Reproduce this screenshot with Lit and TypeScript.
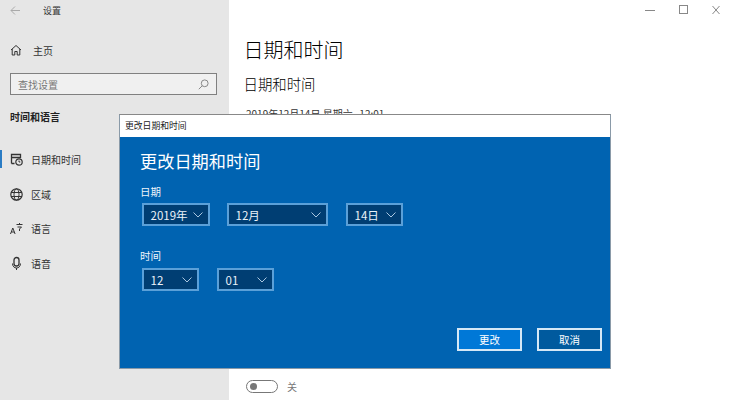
import { LitElement, html, css, svg } from "lit";
import { customElement } from "lit/decorators.js";

const chevron = html`<svg class="chev" width="10" height="6" viewBox="0 0 10 6"><path d="M.5.5L5 5 9.500.5" fill="none" stroke="#a9c6e0" stroke-width="1"/></svg>`;

const icons: Record<string, unknown> = {
  clock: svg`<path d="M2.500 11.500V2.500h9v3.500M2.500 5.500h9M2.500 11.500h3" fill="none" stroke="#333" stroke-width="1.3"/><circle cx="10" cy="10" r="3.200" fill="none" stroke="#333" stroke-width="1.2"/><path d="M10 8.500V10h1.300" fill="none" stroke="#333"/>`,
  globe: svg`<circle cx="7.500" cy="7.500" r="5.700" fill="none" stroke="#333" stroke-width="1.2"/><ellipse cx="7.500" cy="7.500" rx="2.500" ry="5.700" fill="none" stroke="#333"/><path d="M2 5.500h11M2 9.500h11" stroke="#333"/>`,
  lang: svg`<path d="M1.500 13l2.300-6 2.300 6M2.400 11h2.800" fill="none" stroke="#333" stroke-width="1"/><path d="M7.500 3.500h6M10.500 2v1.500M8.500 6h4l-2 2v2" fill="none" stroke="#333" stroke-width="1"/>`,
  mic: svg`<rect x="5" y="1.500" width="5" height="8.500" rx="2.500" fill="none" stroke="#333" stroke-width="1.3"/><path d="M3.500 7.500c0 6 8 6 8 0M7.500 12v2" fill="none" stroke="#333" stroke-width="1"/>`,
};

@customElement("app-root")
export class AppRoot extends LitElement {
  static styles = css`
    :host {
      display: block;
      position: relative;
      width: 729px;
      height: 400px;
      overflow: hidden;
      background: #fff;
      font-family: "Noto Sans CJK SC", "Liberation Sans", sans-serif;
      color: #222;
    }
    .window { display: flex; height: 400px; }
    .side {
      width: 229px;
      flex: none;
      background: #e6e6e6;
      display: flex;
      flex-direction: column;
    }
    .top { display: flex; align-items: center; height: 20px; padding-left: 10px; gap: 23px; font-size: 9px; color: #333; }
    .home { display: flex; align-items: center; gap: 11px; margin-top: 20px; height: 20px; padding-left: 10px; font-size: 10px; color: #333; }
    .search {
      box-sizing: border-box;
      margin: 13px 0 0 10px;
      width: 207px;
      height: 22px;
      border: 1.5px solid #808080;
      background: #f0f0f0;
      display: flex;
      align-items: center;
      justify-content: space-between;
      padding: 0 7px 0 7px;
      font-size: 10px;
      color: #777;
    }
    .group { margin: 12px 0 0 10px; font-size: 10px; font-weight: 700; color: #222; height: 20px; line-height: 20px; }
    .nav { display: flex; flex-direction: column; margin-top: 15px; }
    .item { position: relative; display: flex; align-items: center; height: 34.7px; padding-left: 9px; gap: 7px; font-size: 10px; color: #333; }
    .item.on::before { content: ""; position: absolute; left: 0; top: 8px; width: 2px; height: 18px; background: #2a7cc4; }
    .main { flex: 1; display: flex; flex-direction: column; padding-left: 16px; position: relative; }
    .h1 { font-size: 20px; font-weight: 300; margin: 36px 0 0 -1.500px; line-height: 28px; color: #000; }
    .h2 { font-size: 14.4px; font-weight: 300; margin: 9px 0 0 -1.500px; line-height: 22px; color: #000; }
    .now { font-size: 10px; margin: 12px 0 0 1px; line-height: 14px; color: #333; white-space: pre; }
    .toggle-row { position: absolute; left: 17px; top: 379px; display: flex; align-items: center; gap: 9px; font-size: 10px; color: #777; }
    .toggle { box-sizing: border-box; width: 32px; height: 13px; border: 1.5px solid #777; border-radius: 7px; display: flex; align-items: center; padding-left: 3px; }
    .knob { width: 7px; height: 7px; background: #777; border-radius: 50%; }
    .caps { position: absolute; right: 0; top: 0; display: flex; align-items: center; height: 19px; gap: 24px; padding-right: 9px; }
    .dialog {
      position: absolute;
      left: 119px;
      top: 114px;
      width: 492px;
      height: 255px;
      box-sizing: border-box;
      border: 1px solid #8a9aa8;
      border-top-color: #888;
      background: #fff;
      display: flex;
      flex-direction: column;
    }
    .dtitle { height: 22px; flex: none; display: flex; align-items: center; padding: 0 0 2px 5px; box-sizing: border-box; font-size: 8.8px; color: #222; }
    .dbody {
      flex: 1;
      background: #0063b1;
      color: #fff;
      display: flex;
      flex-direction: column;
      padding: 12px 8px 17px 20px;
      position: relative;
    }
    .dhead { font-size: 17.2px; line-height: 24px; }
    .label { font-size: 10.5px; line-height: 14px; color: #eef5fb; }
    .row { display: flex; margin: 4px 0 0 2px; }
    .row.t { margin-top: 5px; }
    .l1 { margin-top: 12px; }
    .l2 { margin-top: 23px; }
    .sel {
      box-sizing: border-box;
      height: 23px;
      border: 2px solid #5ba0d8;
      background: #003e73;
      display: flex;
      align-items: center;
      justify-content: space-between;
      padding: 0 5px 0 6.500px;
      font-size: 11.5px;
      color: #eaf2f9;
    }
    .btns { margin-top: auto; display: flex; justify-content: flex-end; gap: 15px; }
    .btn {
      box-sizing: border-box;
      width: 65px;
      height: 23px;
      border: 2px solid #d5e8f6;
      display: flex;
      align-items: center;
      justify-content: center;
      font-size: 10.5px;
      color: #fff;
    }
    .btn.pri { background: #0078d7; }
    .btn.sec { background: #005a9e; }
  `;

  private ic(name: string) {
    return html`<svg width="15" height="15" viewBox="0 0 15 15">${icons[name]}</svg>`;
  }

  private sel(text: string, width: number, gap: number) {
    return html`<div class="sel" style="width:${width}px;margin-right:${gap}px"><span>${text}</span>${chevron}</div>`;
  }

  render() {
    return html`
      <div class="window">
        <aside class="side">
          <div class="top">
            <svg width="10" height="9" viewBox="0 0 10 9"><path d="M5 .5L1 4.500l4 4M1 4.500h9" fill="none" stroke="#aaa" stroke-width="1"/></svg>
            <span>设置</span>
          </div>
          <div class="home">
            <svg width="12" height="12" viewBox="0 0 12 12"><path d="M1 6l5-4.500L11 6M2.200 5v6h2.600V7.500h2.400V11h2.600V5" fill="none" stroke="#333" stroke-width="1"/></svg>
            <span>主页</span>
          </div>
          <div class="search">
            <span>查找设置</span>
            <svg width="11" height="11" viewBox="0 0 11 11"><circle cx="6.700" cy="4.300" r="3.400" fill="none" stroke="#888"/><path d="M4.300 6.700L.8 10.200" stroke="#888"/></svg>
          </div>
          <div class="group">时间和语言</div>
          <nav class="nav">
            <div class="item on">${this.ic("clock")}<span>日期和时间</span></div>
            <div class="item">${this.ic("globe")}<span>区域</span></div>
            <div class="item">${this.ic("lang")}<span>语言</span></div>
            <div class="item">${this.ic("mic")}<span>语音</span></div>
          </nav>
        </aside>
        <main class="main">
          <div class="h1">日期和时间</div>
          <div class="h2">日期和时间</div>
          <div class="now">2019年12月14日 星期六   12:01</div>
          <div class="toggle-row"><div class="toggle"><div class="knob"></div></div><span>关</span></div>
          <div class="caps">
            <svg width="10" height="10" viewBox="0 0 10 10"><path d="M0 5.500h10" stroke="#888"/></svg>
            <svg width="9" height="10" viewBox="0 0 9 10"><rect x=".5" y=".5" width="8" height="8" fill="none" stroke="#888"/></svg>
            <svg width="8" height="10" viewBox="0 0 8 10"><path d="M.5 1l7 8M7.500 1l-7 8" stroke="#888"/></svg>
          </div>
        </main>
      </div>
      <section class="dialog">
        <div class="dtitle">更改日期和时间</div>
        <div class="dbody">
          <div class="dhead">更改日期和时间</div>
          <div class="label l1">日期</div>
          <div class="row">${this.sel("2019年", 68, 17)}${this.sel("12月", 101, 18)}${this.sel("14日", 57, 0)}</div>
          <div class="label l2">时间</div>
          <div class="row t">${this.sel("12", 57, 18)}${this.sel("01", 57, 0)}</div>
          <div class="btns"><div class="btn pri">更改</div><div class="btn sec">取消</div></div>
        </div>
      </section>
    `;
  }
}
